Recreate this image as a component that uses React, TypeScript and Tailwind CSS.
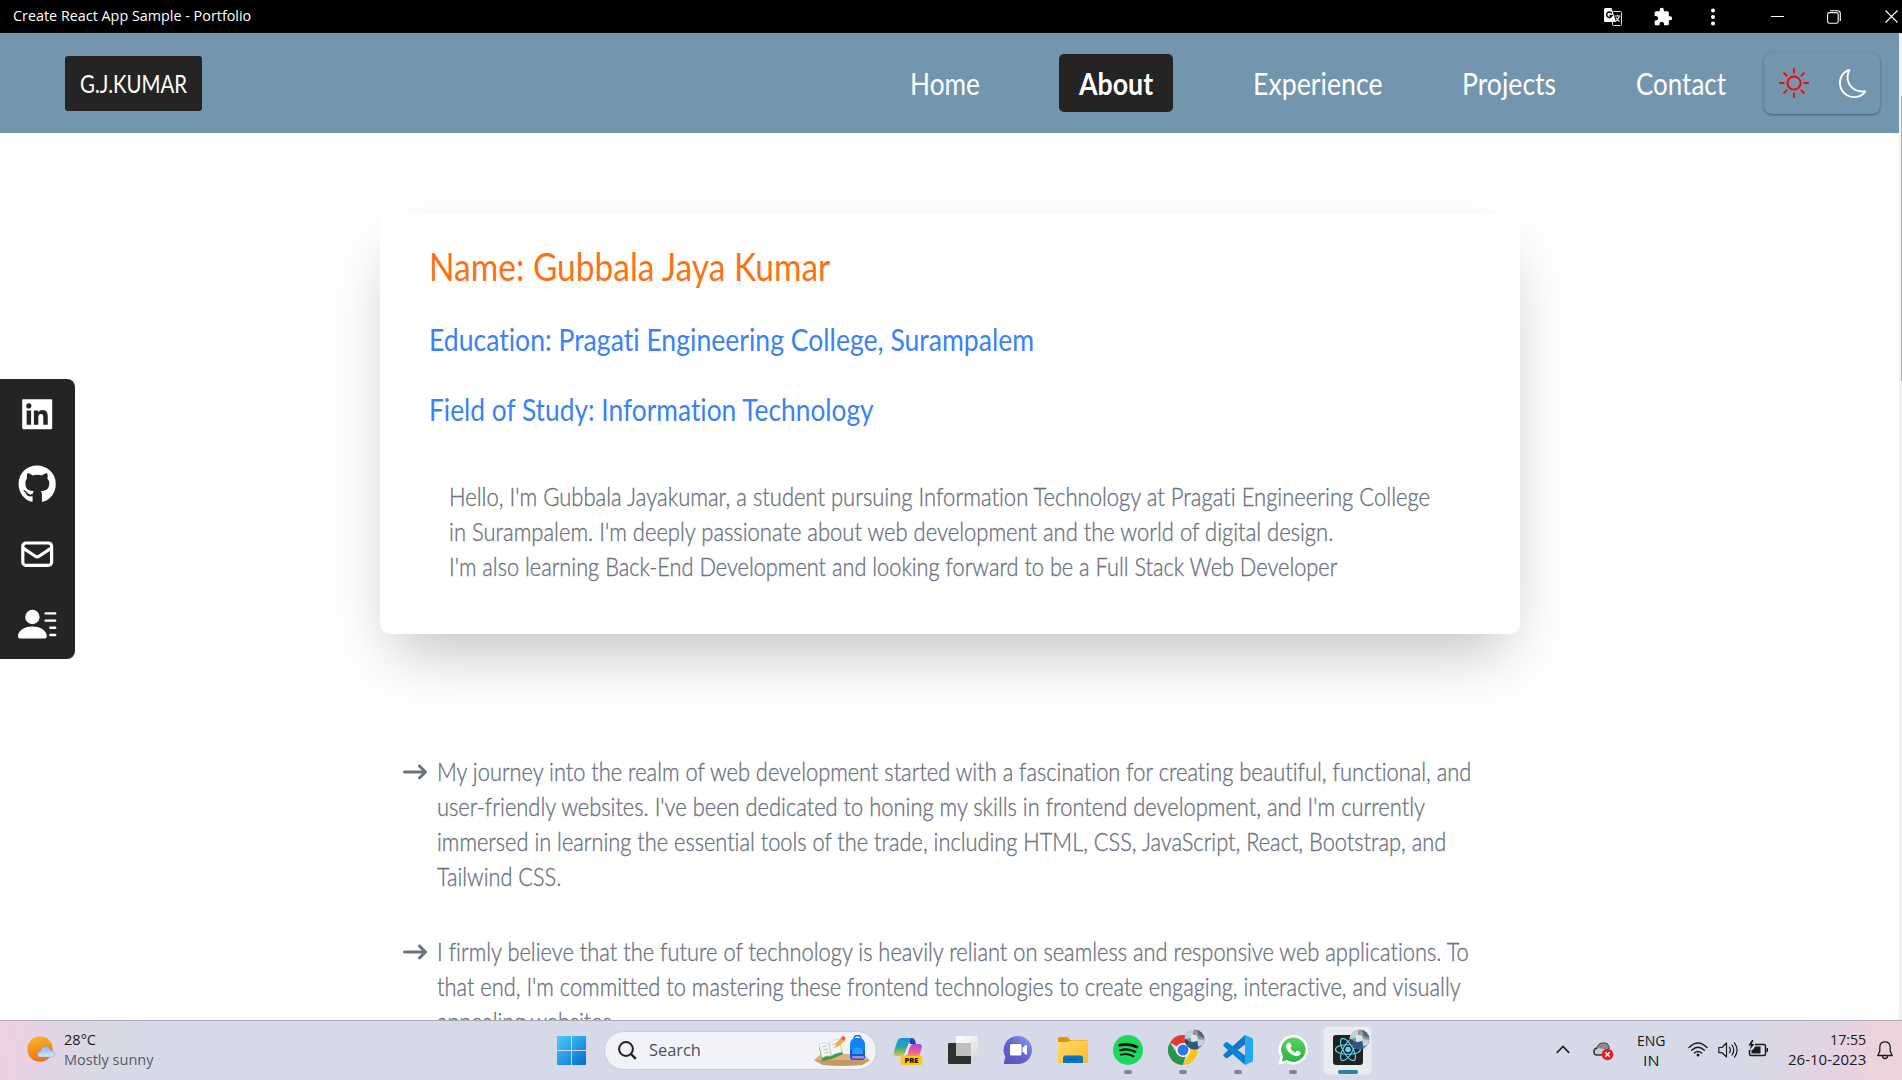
import { useLayoutEffect, useRef, useState } from "react";
import type { ReactNode } from "react";
import { AiFillLinkedin } from "react-icons/ai";
import { FaGithub } from "react-icons/fa";
import { FaArrowRightLong } from "react-icons/fa6";
import { HiOutlineMail } from "react-icons/hi";
import { BsPersonLinesFill, BsSun, BsMoon } from "react-icons/bs";
import { MdExtension } from "react-icons/md";

// A single line of text condensed or widened to exactly `w` pixels.
function Fit({ w, className = "", children }: { w: number; className?: string; children: ReactNode }) {
  const ref = useRef<HTMLSpanElement>(null);
  const [scale, setScale] = useState(1);
  useLayoutEffect(() => {
    const measure = () => {
      if (ref.current && ref.current.offsetWidth) setScale(w / ref.current.offsetWidth);
    };
    measure();
    document.fonts?.ready.then(measure);
  }, [w]);
  return (
    <span className={`block whitespace-nowrap ${className}`} style={{ width: w }}>
      <span ref={ref} className="inline-block origin-left" style={{ transform: `scaleX(${scale})` }}>
        {children}
      </span>
    </span>
  );
}

function TitleBar() {
  return (
    <header className="flex h-[33px] items-center bg-black pl-[13px] font-['Open_Sans',sans-serif] text-white">
      <Fit w={238} className="text-[14px] leading-[33px] -mt-[2px]">Create React App Sample - Portfolio</Fit>
      <div className="ml-auto flex items-center pr-[4px]">
        <svg className="h-[18px] w-[18px]" viewBox="0 0 18 18">
          <rect x="8.5" y="3.5" width="9" height="14" rx="1" fill="none" stroke="#ddd" />
          <path d="M1.5 0h6L12 14H1.5Q0 14 0 12.500V1.500Q0 0 1.500 0Z" fill="#fff" />
          <path d="M7.700 5.300A2.700 2.700 0 1 0 8 7.500H5.500" fill="none" stroke="#000" strokeWidth="1.400" />
          <path d="M10.500 8h6M13.500 6.800V8M15.500 8c-.6 2.500-2 4-4 5.500M11.800 9.500c.8 1.500 2 2.800 3.800 4" fill="none" stroke="#ddd" strokeWidth="1.100" />
        </svg>
        <MdExtension className="ml-[31px] size-[20px]" />
        <svg className="ml-[31px] h-[18px] w-[18px]" viewBox="0 0 18 18" fill="#fff">
          <circle cx="9" cy="2.500" r="2" /><circle cx="9" cy="9" r="2" /><circle cx="9" cy="15.500" r="2" />
        </svg>
        <span className="ml-[49px] h-px w-[13px] bg-white" />
        <svg className="ml-[43px] h-[14px] w-[14px]" viewBox="0 0 14 14" fill="none" stroke="#fff" strokeWidth="1.100">
          <rect x=".6" y="2.600" width="10.600" height="10.600" rx="1.800" />
          <path d="M3 .8h7.500Q13.300.8 13.300 3.500V11" />
        </svg>
        <svg className="ml-[44px] h-[13px] w-[13px]" viewBox="0 0 13 13" stroke="#fff" strokeWidth="1.100">
          <path d="M.5.5l12 12M12.500.5l-12 12" />
        </svg>
      </div>
    </header>
  );
}

function NavBar() {
  return (
    <nav className="flex h-[100px] items-center bg-[#7495ae] pl-[65px] pr-[22px] text-white">
      <div className="flex h-[55px] w-[137px] items-center justify-center rounded-[3px] bg-[#242424]">
        <Fit w={107} className="text-[25px] leading-[30px]">G.J.KUMAR</Fit>
      </div>
      <div className="ml-auto flex h-full items-center text-[30px] leading-[36px]">
        <Fit w={70}>Home</Fit>
        <div className="ml-[79px] flex h-[58px] w-[114px] items-center justify-center rounded-[5px] bg-[#242424] font-bold">
          <Fit w={74}>About</Fit>
        </div>
        <Fit w={130} className="ml-[80px]">Experience</Fit>
        <Fit w={94} className="ml-[79px]">Projects</Fit>
        <Fit w={90} className="ml-[80px]">Contact</Fit>
      </div>
      <div className="ml-[38px] flex h-[61px] w-[116px] items-center rounded-[8px] pl-[15px] shadow-[0_1px_3px_rgba(0,0,0,0.3),0_1px_2px_-1px_rgba(0,0,0,0.4)]">
        <BsSun className="size-[30px] text-[#ff0000]" />
        <BsMoon className="ml-[30px] size-[29px]" />
      </div>
    </nav>
  );
}

function SocialRail() {
  return (
    <aside className="absolute left-0 top-[379px] flex h-[280px] w-[75px] flex-col items-center rounded-r-[8px] bg-[#242424] text-[38.4px] text-white">
      <div className="flex h-[70px] items-center"><AiFillLinkedin /></div>
      <div className="flex h-[70px] items-center"><FaGithub /></div>
      <div className="flex h-[70px] items-center"><HiOutlineMail /></div>
      <div className="flex h-[70px] items-center"><BsPersonLinesFill /></div>
    </aside>
  );
}

type Line = [string, number];

const intro: Line[] = [
  ["Hello, I'm Gubbala Jayakumar, a student pursuing Information Technology at Pragati Engineering College", 981],
  ["in Surampalem. I'm deeply passionate about web development and the world of digital design.", 884],
  ["I'm also learning Back-End Development and looking forward to be a Full Stack Web Developer", 888],
];

const points: Line[][] = [
  [
    ["My journey into the realm of web development started with a fascination for creating beautiful, functional, and", 1034],
    ["user-friendly websites. I've been dedicated to honing my skills in frontend development, and I'm currently", 988],
    ["immersed in learning the essential tools of the trade, including HTML, CSS, JavaScript, React, Bootstrap, and", 1009],
    ["Tailwind CSS.", 124],
  ],
  [
    ["I firmly believe that the future of technology is heavily reliant on seamless and responsive web applications. To", 1032],
    ["that end, I'm committed to mastering these frontend technologies to create engaging, interactive, and visually", 1024],
    ["appealing websites.", 180],
  ],
];

function Content() {
  return (
    <main className="h-[887px] overflow-hidden bg-white pt-[81px] text-[#6b7280] [font-variant-ligatures:none]">
      <section className="ml-[380px] h-[420px] w-[1140px] rounded-[10px] bg-white pl-[49px] shadow-[0_30px_60px_-14px_rgba(0,0,0,0.25)]">
        <Fit w={401} className="pt-[28px] text-[38px] leading-[48px] text-[#f97316]">Name: Gubbala Jaya Kumar</Fit>
        <Fit w={605} className="mt-[29px] text-[30px] leading-[40px] text-[#3b82f6]">Education: Pragati Engineering College, Surampalem</Fit>
        <Fit w={445} className="mt-[30px] text-[30px] leading-[40px] text-[#3b82f6]">Field of Study: Information Technology</Fit>
        <div className="ml-[20px] mt-[50px] text-[24.500px] font-light leading-[35px] [-webkit-text-stroke:0.35px_#6b7280]">
          {intro.map(([t, w]) => <Fit key={t} w={w}>{t}</Fit>)}
        </div>
      </section>
      <ul className="ml-[403px] mt-[120px] flex flex-col gap-[40px] text-[24.500px] font-light leading-[35px] [-webkit-text-stroke:0.35px_#6b7280]">
        {points.map((lines) => (
          <li key={lines[0][0]} className="flex">
            <FaArrowRightLong className="mt-[6px] size-[24px] shrink-0" />
            <div className="ml-[10px]">
              {lines.map(([t, w]) => <Fit key={t} w={w}>{t}</Fit>)}
            </div>
          </li>
        ))}
      </ul>
    </main>
  );
}

function Avatar() {
  return (
    <svg className="absolute -right-[7px] -top-[6px] size-[21px]" viewBox="0 0 21 21">
      <clipPath id="avatarClip"><circle cx="10.500" cy="10.500" r="10" /></clipPath>
      <g clipPath="url(#avatarClip)">
        <path fill="#8295a3" d="M0 0h21v21H0z" />
        <path fill="#b8d3dc" d="M0 3l8-3 5 4-6 5-7 1z" />
        <path fill="#56646b" d="M13 0h8v9l-6-2z" />
        <path fill="#d9e6ea" d="M7 6l4-2 3 5-1 5-6-1z" />
        <path fill="#b98776" d="M9 2h3v4H9z" />
        <path fill="#2f5a80" d="M4 12l5 1 4-1 2 9H3z" />
        <path fill="#c8d3d6" d="M14 10l6 1-1 5-5 1z" />
        <path fill="#39454d" d="M0 10l4 1v5l-4 1z" />
      </g>
    </svg>
  );
}

function AppIcon({ running = false, children }: { running?: boolean; children: ReactNode }) {
  return (
    <div className="flex w-[55px] flex-col items-center pt-[14px]">
      <div className="relative size-[30px]">{children}</div>
      {running && <span className="mt-[5px] h-[4px] w-[8px] rounded-full bg-[#818590]" />}
    </div>
  );
}

function Copilot() {
  return (
    <svg viewBox="0 0 30 30" className="size-[30px]">
      <defs>
        <linearGradient id="cpA" x1="0" y1="0" x2="0" y2="1">
          <stop offset="0" stopColor="#1d8fe8" /><stop offset=".5" stopColor="#22a9a0" /><stop offset="1" stopColor="#d9c830" />
        </linearGradient>
        <linearGradient id="cpB" x1="0" y1="0" x2="0" y2="1">
          <stop offset="0" stopColor="#a84be0" /><stop offset=".6" stopColor="#ee5b93" /><stop offset="1" stopColor="#f6a060" />
        </linearGradient>
      </defs>
      <path d="M15 3h4q3 0 4 6h-6z" fill="#1746b8" />
      <path d="M9 3h10q-2 1-3 4l-3 9q-1 5-5 5H3q-3 0-2-5L4 7q1-4 5-4Z" fill="url(#cpA)" />
      <path d="M18 9h8q4 0 2.500 5L26 22H11l2-2q1-1 2-5l1-4q.5-2 2-2Z" fill="url(#cpB)" />
      <path d="M15.500 9h4q-2 1-3 4l-2 7h-3.500z" fill="#f3d9ff" />
      <rect x="7.500" y="21" width="22" height="9" rx="2" fill="#ffc715" />
      <text x="18.500" y="28.300" textAnchor="middle" fontSize="7.600" fontWeight="800" fontFamily="Open Sans, sans-serif" fill="#1c1600">PRE</text>
    </svg>
  );
}

function Taskbar() {
  return (
    <footer className="flex h-[60px] border-t border-[#a9abb5] bg-[linear-gradient(100deg,#efd0e2_0px,#e5d3e5_45px,#d9d8e7_100px,#d6dae8_160px,#d6dae8_1720px,#e4d2e6_1810px,#ecd3dc_1850px,#edd3d8_1902px)] font-['Open_Sans',sans-serif] text-[#1b1b1b]">
      <div className="flex w-[557px] pl-[27px]">
        <svg className="mt-[15px] h-[28px] w-[29px]" viewBox="0 0 29 28">
          <defs>
            <linearGradient id="sun" x1=".3" y1="0" x2=".6" y2="1"><stop stopColor="#f0b92c" /><stop offset="1" stopColor="#f26a10" /></linearGradient>
            <linearGradient id="cld" x1="0" y1="0" x2="0" y2="1"><stop stopColor="#8fb8f5" /><stop offset="1" stopColor="#d3e4fb" /></linearGradient>
          </defs>
          <circle cx="13" cy="13" r="12.700" fill="url(#sun)" />
          <path d="M13 21q-2.500 0-2.500-2.600 0-2.500 3-2.700 1.200-5.200 5.200-5.200 3.600 0 4.600 3.900 4.700.3 4.700 3.700 0 2.900-3.500 2.900Z" fill="url(#cld)" stroke="#7ba6ea" strokeWidth=".5" />
        </svg>
        <div className="ml-[8px] mt-[8px] text-[15px] leading-[20px]">
          <Fit w={32}>28°C</Fit>
          <Fit w={89} className="text-[#555a63]">Mostly sunny</Fit>
        </div>
      </div>
      <svg className="mt-[15px] size-[29px]" viewBox="0 0 29 29">
        <defs>
          <linearGradient id="winAll" gradientUnits="userSpaceOnUse" x1="0" y1="0" x2="26" y2="29"><stop stopColor="#4dcefb" /><stop offset="1" stopColor="#0470d2" /></linearGradient>
        </defs>
        <path d="M1 0h13v14H0V1q0-1 1-1ZM15 0h13q1 0 1 1v13H15ZM0 15h14v14H1q-1 0-1-1ZM15 15h14v13q0 1-1 1H15Z" fill="url(#winAll)" />
      </svg>
      <div className="ml-[18px] mt-[10px] flex h-[39px] w-[273px] shrink-0 items-center rounded-full border border-[#c9cbdd] bg-[#f2f3f8] pl-[13px]">
        <svg className="size-[19px] shrink-0" viewBox="0 0 19 19" fill="none" stroke="#222" strokeWidth="2">
          <circle cx="8" cy="8" r="6.900" /><path d="M13 13l4.800 4.800" strokeWidth="2.400" />
        </svg>
        <Fit w={52} className="ml-[12px] -mt-px text-[17px] leading-[24px] text-[#4d4f55]">Search</Fit>
        <svg className="ml-[112px] h-[32px] w-[58px] shrink-0" viewBox="0 0 58 32">
          <path d="M1 25l7-6h42l7 6-8 5H10Z" fill="#dcb183" /><path d="M1 25h56l-8 5q-20 2-39 0Z" fill="#c79863" />
          <path d="M6 12l10-3 10-4 4 14-11 5-10 2Z" fill="#3c9a4d" />
          <path d="M6 9q6-3 10 0 4-5 10-5l3 13q-7 1-11 4-5-1-9 2Z" fill="#f4f6f2" stroke="#c7cec6" strokeWidth=".6" />
          <path d="M16 9l2.500 12M9 12l5-1M10 15l5-1M11 18l5-1M19 10l5-2M20 13l5-2" stroke="#aab2ae" strokeWidth=".7" />
          <path d="M22 12l1-4 6-6 3 3-6 6Z" fill="#f6a831" /><path d="M28 3l2-2q2 0 2.500 3l-2 2Z" fill="#ee5a48" />
          <path d="M41 4q0-3.500 3.500-3.500T48 4" fill="none" stroke="#1766c8" strokeWidth="1.500" />
          <rect x="37" y="3" width="15" height="22" rx="6" fill="#1284ee" /><path d="M37 15h15v7q0 3-3 3h-9q-3 0-3-3Z" fill="#1557d6" />
          <path d="M39 15q5-5 11 0v4H39Z" fill="#2b9cff" /><rect x="39" y="21" width="12" height="2.500" rx="1" fill="#a98be8" />
        </svg>
      </div>
      <div className="ml-[3px] flex">
        <AppIcon><Copilot /></AppIcon>
        <AppIcon>
          <svg viewBox="0 0 30 30" className="size-[30px]">
            <defs><linearGradient id="tvw" x1="0" y1="0" x2="1" y2="1"><stop stopColor="#fff" /><stop offset="1" stopColor="#dcdcdf" /></linearGradient></defs>
            <rect y="8" width="23" height="21" rx="1" fill="#30302f" /><rect x="8" y="1" width="22" height="20" rx="1" fill="url(#tvw)" />
            <path d="M8 8h15v13H8Z" fill="#bfc0c1" />
          </svg>
        </AppIcon>
        <AppIcon>
          <svg viewBox="0 0 30 30" className="size-[30px]">
            <defs><linearGradient id="cht" x1="0" y1="1" x2="1" y2="0"><stop stopColor="#5b4fbd" /><stop offset=".5" stopColor="#6565c8" /><stop offset="1" stopColor="#83a3f5" /></linearGradient></defs>
            <path d="M15 1a14 14 0 0 1 0 28H2q-2 0-1-2l1.500-5A14 14 0 0 1 15 1Z" fill="url(#cht)" />
            <rect x="7" y="9" width="11.500" height="11.500" rx="1.500" fill="#fff" /><path d="M19.500 13l3-3q1.500-.5 1.500 1v7.500q0 1.500-1.500 1l-3-3Z" fill="#fff" />
          </svg>
        </AppIcon>
        <AppIcon>
          <svg viewBox="0 0 30 30" className="size-[30px]">
            <defs><linearGradient id="fld" x1="0" y1="0" x2="1" y2="1"><stop stopColor="#ffdb6c" /><stop offset="1" stopColor="#fbbb25" /></linearGradient></defs>
            <path d="M0 3.500Q0 2 1.500 2H9q1.500 0 3 3h16q2 0 2 2v6H0Z" fill="#dc9806" />
            <path d="M0 7h10l3-1.500h17v21q0 1.500-1.500 1.500h-27Q0 28 0 26.500Z" fill="url(#fld)" />
            <path d="M5 28v-5q0-2.500 2.500-2.500h15Q25 20.500 25 23v5Z" fill="#0b74c6" /><path d="M9 24.500h12" stroke="#075193" strokeWidth="1.300" />
          </svg>
        </AppIcon>
        <AppIcon running>
          <svg viewBox="0 0 30 30" className="size-[30px]">
            <circle cx="15" cy="15" r="15" fill="#1ed760" />
            <g fill="none" stroke="#0a0a0a" strokeLinecap="round"><path d="M6.500 10.300q9-2.700 17.500 1.700" strokeWidth="2.700" /><path d="M7.300 15.200q7.700-2.200 15 1.600" strokeWidth="2.200" /><path d="M8 19.700q6.500-1.600 12.500 1.600" strokeWidth="1.900" /></g>
          </svg>
        </AppIcon>
        <AppIcon running>
          <svg viewBox="0 0 30 30" className="size-[30px]">
            <path d="M15 15L2 7.500A15 15 0 0 1 28 7.500Z" fill="#e23c30" /><path d="M15 8h13a15 15 0 0 1-13 22l6.500-12Z" fill="#fdc51b" />
            <path d="M2 7.500l7 11 6 3.500 2.500-.5L15 30A15 15 0 0 1 2 7.500Z" fill="#27964a" />
            <circle cx="15" cy="15" r="7" fill="#fff" /><circle cx="15" cy="15" r="5.500" fill="#2f75e8" />
          </svg>
          <Avatar />
        </AppIcon>
        <AppIcon running>
          <svg viewBox="0 0 30 30" className="size-[30px]">
            <path d="M22 0v9.500L4.500 23 3 23.300.4 21v-1.500Z" fill="#1079c5" />
            <path d="M.4 9.500L3 7l1.500.3L22 20.500V30L.4 11Z" fill="#0a84ce" />
            <path d="M22 0l7 3q1 .5 1 2v20q0 1.500-1 2l-7 3Z" fill="#25a8f2" />
          </svg>
        </AppIcon>
        <AppIcon running>
          <svg viewBox="0 0 30 30" className="size-[30px]">
            <defs><linearGradient id="wa" x1="0" y1="0" x2="0" y2="1"><stop stopColor="#5bd265" /><stop offset="1" stopColor="#2ab340" /></linearGradient></defs>
            <path d="M15.300 0A14.700 14.700 0 1 1 8.500 27.700L.2 29.800 2.400 22A14.700 14.700 0 0 1 15.300 0Z" fill="#fff" />
            <path d="M15.300 2.500A12.200 12.200 0 1 1 9 25.100L3.800 26.400 5.200 21.500A12.200 12.200 0 0 1 15.300 2.500Z" fill="url(#wa)" />
            <path d="M9.700 8.300q1.200-1.400 2.500-.3l1.300 3q.3.800-1.200 2.200 1.800 3.400 4.800 4.500l1.700-1.900q.6-.3 3.500 1.300.8.500-.2 2.400-2 2.500-5.500 1.300-5.500-2-8.300-7.200-1.200-3 1.400-5.300Z" fill="#fff" />
          </svg>
        </AppIcon>
        <div className="ml-[3px] mt-[5px] flex h-[49px] w-[49px] flex-col items-center rounded-[5px] border border-[#dfe0ea] bg-[#e9ebf3] pt-[8px]">
          <div className="relative size-[30px] shrink-0 rounded-[3px] bg-[#222]">
            <svg viewBox="0 0 30 30" className="size-[30px]" fill="none" stroke="#61dafb" strokeWidth="1.100">
              <ellipse cx="15" cy="14.500" rx="12.500" ry="4.800" /><ellipse cx="15" cy="14.500" rx="12.500" ry="4.800" transform="rotate(60 15 14.500)" /><ellipse cx="15" cy="14.500" rx="12.500" ry="4.800" transform="rotate(120 15 14.500)" />
              <circle cx="15" cy="14.500" r="2.200" fill="#61dafb" />
            </svg>
            <Avatar />
          </div>
          <span className="mt-[5px] h-[4px] w-[20px] shrink-0 rounded-full bg-[#26859b]" />
        </div>
      </div>
      <div className="ml-auto flex pr-[9px]">
        <svg className="mt-[24px] h-[9px] w-[14px]" viewBox="0 0 14 9" fill="none" stroke="#222" strokeWidth="1.700"><path d="M.8 7.800L7 1.500l6.200 6.300" /></svg>
        <svg className="ml-[23px] mt-[20px] h-[20px] w-[21px]" viewBox="0 0 21 20">
          <path d="M4 14q-3 0-3.200-3.300Q1 7.500 4 7q2-5 6.500-4.800Q15 2 16 7q-4 0-6 7Z" fill="#c9cbcf" stroke="#333" strokeWidth="1.500" />
          <path d="M4 7q2-5 6.500-4.800Q15 2 16 7q-2 2-6 1T4 7Z" fill="#8b8e90" />
          <circle cx="14.500" cy="13.500" r="5.800" fill="#de1f2b" /><path d="M12.300 11.300l4.400 4.400M16.700 11.300l-4.400 4.400" stroke="#fff" strokeWidth="1.400" />
        </svg>
        <div className="ml-[22px] mt-[9px] flex w-[30px] flex-col items-center text-[15px] leading-[20px]">
          <Fit w={29}>ENG</Fit>
          <Fit w={16}>IN</Fit>
        </div>
        <svg className="ml-[22px] mt-[20px] h-[17px] w-[20px]" viewBox="0 0 20 17" fill="none" stroke="#1b1b1b" strokeWidth="1.400" strokeLinecap="round">
          <path d="M1 6.500Q10-2.500 19 6.500M3.700 9.200q6.300-6 12.600 0M6.400 12q3.600-3.200 7.200 0" /><circle cx="10" cy="14" r="1.500" fill="#1b1b1b" stroke="none" />
        </svg>
        <svg className="ml-[10px] mt-[20px] h-[18px] w-[20px]" viewBox="0 0 20 18" fill="none" stroke="#1b1b1b" strokeWidth="1.200" strokeLinecap="round" strokeLinejoin="round">
          <path d="M.8 6.500H4L8.500 2v14L4 11.700H.8ZM11.500 6.300q1.800 2.700 0 5.400M14 4q3.500 5 0 10M16.500 1.800q5.200 7.200 0 14.400" />
        </svg>
        <svg className="ml-[10px] mt-[19px] h-[18px] w-[20px]" viewBox="0 0 20 18">
          <path d="M7 4.500h9q1.500 0 1.500 1.500v8q0 1.500-1.500 1.500H3Q1.500 15.500 1.500 14V10" fill="none" stroke="#1b1b1b" strokeWidth="1.500" />
          <path d="M7 6.500h5.500v7h-9V10q2 0 3.500-3.500Z" fill="#1b1b1b" /><path d="M18.500 8h1.500v4h-1.500zM4 0L.3 5.500H3L1.500 10 6.500 4H3.800L5.500 0Z" fill="#1b1b1b" />
        </svg>
        <div className="ml-[20px] mt-[8px] flex w-[78px] flex-col items-end text-[15px] leading-[20px]">
          <Fit w={36}>17:55</Fit>
          <Fit w={78}>26-10-2023</Fit>
        </div>
        <svg className="ml-[11px] mt-[20px] h-[19px] w-[16px]" viewBox="0 0 16 19" fill="none" stroke="#1b1b1b" strokeWidth="1.300" strokeLinejoin="round">
          <path d="M8 .8q5 0 5.200 5.200v4l2 4.500H.8l2-4.500V6Q3 .8 8 .8ZM5.500 15q0 2.500 2.500 2.500T10.500 15" />
        </svg>
      </div>
    </footer>
  );
}

export default function App() {
  return (
    <div className="relative h-[1080px] w-[1902px] overflow-hidden bg-white font-['Lato',sans-serif]">
      <TitleBar />
      <NavBar />
      <Content />
      <Taskbar />
      <SocialRail />
      <div className="absolute right-0 top-[33px] h-[987px] w-[3px] bg-[#f1f1f1] pl-[2px] pt-[63px]">
        <div className="h-[285px] w-px bg-[#b0b0b0]" />
      </div>
    </div>
  );
}
